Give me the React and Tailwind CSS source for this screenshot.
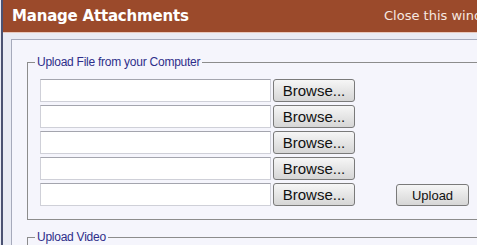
import React from 'react';

const rows = [0, 1, 2, 3, 4];

const BrowseButton = () => (
  <button
    type="button"
    className="w-[82px] h-[23px] rounded-[3px] border border-[#7a7a7a] bg-gradient-to-b from-[#f6f6f6] to-[#d6d6d6]
      text-[15px] leading-none text-[#111] font-['Liberation_Sans',Arial,sans-serif]"
  >
    Browse...
  </button>
);

const App = () => {
  return (
    <div className="w-[477px] h-[245px] overflow-hidden bg-[#e9ebf4] pl-px font-['DejaVu_Sans',Verdana,sans-serif]">
      <div className="h-full border-l-2 border-[#4b5272] flex flex-col">
        {/* Title bar */}
        <div className="h-[33px] shrink-0 bg-[#9b4a2b] border-b border-[#e8c8bc] flex items-center justify-between pl-[9px] whitespace-nowrap">
          <span className="text-[15px] font-bold text-white tracking-[-0.2px]">Manage Attachments</span>
          <span className="text-[13px] text-[#f6e8e0] w-[93px] overflow-hidden">Close this window</span>
        </div>

        {/* Panel */}
        <div className="mt-[6px] ml-[8px] w-[540px] border border-[#a6aabb] bg-[#f5f5fc] pl-[15px] pt-[15px]">
          <fieldset className="border border-[#8c8c8c] pl-[12px] pr-3 pb-[13px] pt-[10px]">
            <legend className="-ml-[5px] px-[2px] text-[12px] leading-[14px] tracking-[-0.25px] text-[#2e2e8a] font-['Liberation_Sans',Arial,sans-serif]">
              Upload File from your Computer
            </legend>
            <div className="flex items-end">
              <div className="flex flex-col gap-[3px]">
                {rows.map((r) => (
                  <div key={r} className="flex items-center gap-[2px]">
                    <div className="w-[231px] h-[23px] bg-white border border-[#cfd0d8] border-t-[#a4a5ae]" />
                    <BrowseButton />
                  </div>
                ))}
              </div>
              <button
                type="button"
                className="ml-[41px] w-[73px] h-[22px] rounded-[3px] border border-[#7a7a7a] bg-gradient-to-b from-[#f6f6f6] to-[#d6d6d6]
                  text-[13px] leading-none text-[#111] font-['Liberation_Sans',Arial,sans-serif]"
              >
                Upload
              </button>
            </div>
          </fieldset>

          <fieldset className="mt-[10px] border border-[#8c8c8c] pl-[12px] h-[40px]">
            <legend className="-ml-[5px] px-[2px] text-[12px] leading-[14px] tracking-[-0.25px] text-[#2e2e8a] font-['Liberation_Sans',Arial,sans-serif]">
              Upload Video
            </legend>
          </fieldset>
        </div>
      </div>
    </div>
  );
};

export default App;
